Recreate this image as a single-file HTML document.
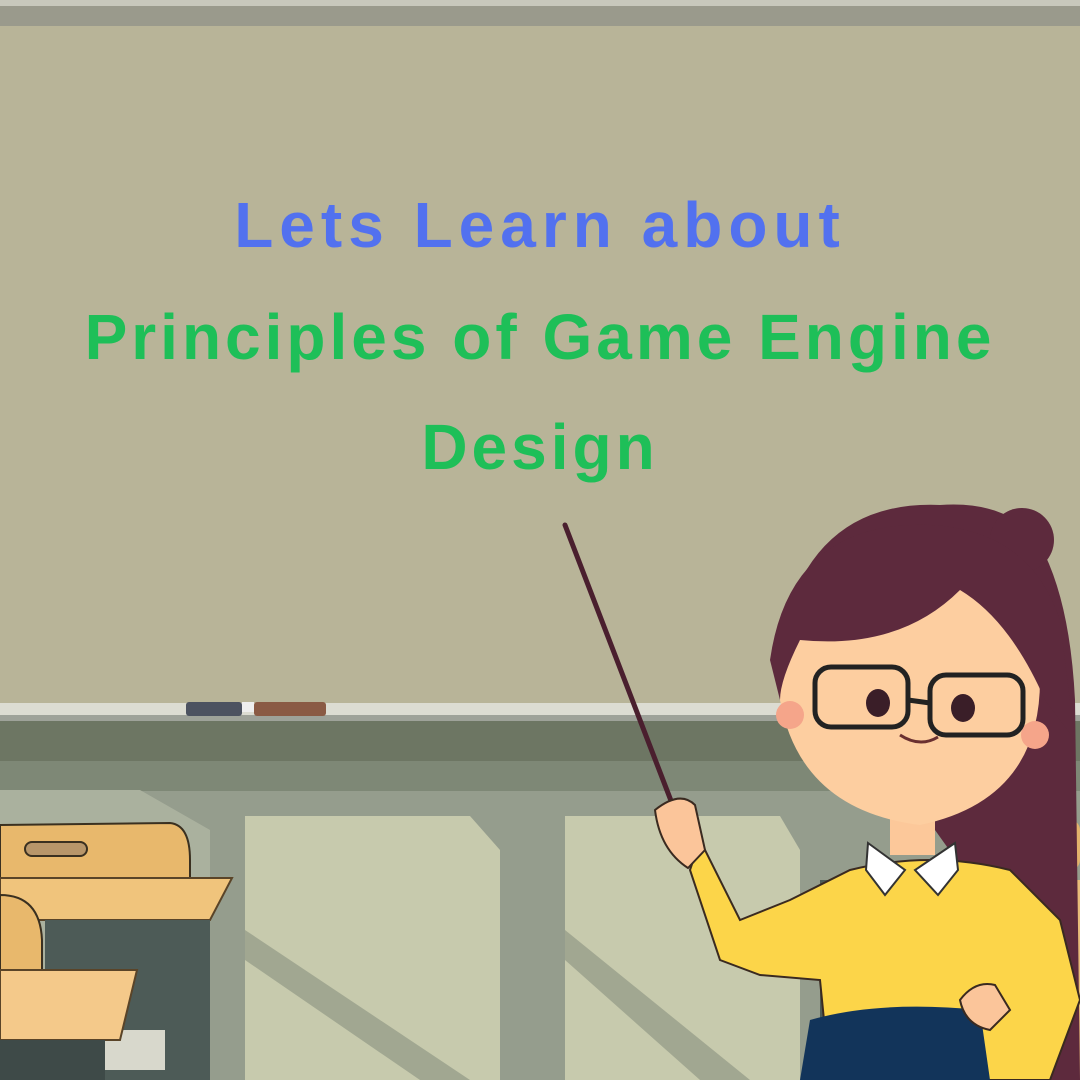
<!DOCTYPE html>
<html><head><meta charset="utf-8"><style>
html,body{margin:0;padding:0;width:1080px;height:1080px;overflow:hidden;background:#b8b498}
svg{position:absolute;left:0;top:0}
.t{position:absolute;left:0;width:1080px;text-align:center;font-family:"Comic Sans MS","Liberation Sans",sans-serif;font-weight:bold;letter-spacing:4px}
</style></head><body>
<svg width="1080" height="1080" viewBox="0 0 1080 1080">
<rect x="0" y="0" width="1080" height="1080" fill="#8d9586"/>
<rect x="0" y="0" width="1080" height="28" fill="#9a9a8c"/>
<rect x="0" y="0" width="1080" height="6" fill="#c8c8bc"/>
<rect x="0" y="26" width="1080" height="678" fill="#b8b498"/>
<rect x="0" y="703" width="1080" height="18" fill="#dcdcd2"/>
<rect x="0" y="715" width="1080" height="6" fill="#9ea299"/>
<rect x="186" y="702" width="56" height="14" rx="3" fill="#4c5260"/>
<rect x="242" y="702" width="12" height="10" fill="#eee"/>
<rect x="254" y="702" width="72" height="14" rx="3" fill="#8a5a44"/>
<rect x="0" y="721" width="1080" height="40" fill="#6d7663"/>
<rect x="0" y="761" width="1080" height="30" fill="#7e8876"/>
<rect x="0" y="791" width="1080" height="289" fill="#959d8d"/>
<polygon points="0,790 140,790 210,830 210,1080 0,1080" fill="#aab19e"/>
<polygon points="245,816 470,816 500,850 500,1080 245,1080" fill="#c7caad"/>
<polygon points="245,930 245,960 420,1080 470,1080" fill="#a1a791"/>
<polygon points="565,816 780,816 800,850 800,1080 565,1080" fill="#c7caad"/>
<polygon points="565,930 565,960 700,1080 750,1080" fill="#a1a791"/>
<path d="M0,825 L170,823 Q190,825 190,860 L190,880 L0,880 Z" fill="#e8b86c" stroke="#3a3020" stroke-width="2"/>
<rect x="25" y="842" width="62" height="14" rx="7" fill="#b8966a" stroke="#3a3020" stroke-width="2"/>
<polygon points="0,878 232,878 210,920 0,920" fill="#f0c47c" stroke="#5a4428" stroke-width="2"/>
<rect x="45" y="920" width="165" height="160" fill="#4d5b57"/>
<rect x="100" y="1030" width="65" height="40" fill="#d8d8cc"/>
<path d="M0,895 Q40,895 42,940 L42,975 L0,975 Z" fill="#e8b86c" stroke="#3a3020" stroke-width="2"/>
<polygon points="0,970 137,970 120,1040 0,1040" fill="#f4c98a" stroke="#5a4428" stroke-width="2"/>
<rect x="0" y="1040" width="105" height="40" fill="#3e4a48"/>
<rect x="1020" y="820" width="60" height="50" rx="10" fill="#e3b36c"/>
<rect x="820" y="880" width="260" height="200" fill="#4d5b57"/>
<rect x="1030" y="880" width="50" height="200" fill="#e9bd7a"/>
<line x1="565" y1="525" x2="703" y2="884" stroke="#4a1f2e" stroke-width="5" stroke-linecap="round"/>
<path d="M785,620 Q820,500 940,505 Q1010,500 1040,545 Q1070,600 1075,700 L1080,1080 L1010,1080 L985,900 Z" fill="#5d2a3d"/>
<circle cx="1022" cy="540" r="32" fill="#5d2a3d"/>
<path d="M850,870 Q930,850 1010,870 L1060,920 L1080,1000 L1050,1080 L830,1080 L820,980 L760,975 L720,960 L690,870 L700,840 L740,920 L790,900 Z" fill="#fcd549" stroke="#3a2a20" stroke-width="2"/>
<path d="M810,1020 Q880,1000 980,1010 L990,1080 L800,1080 Z" fill="#12345a"/>
<polygon points="868,843 905,870 885,895 866,870" fill="#fff" stroke="#333" stroke-width="2"/>
<polygon points="955,843 915,870 938,895 958,870" fill="#fff" stroke="#333" stroke-width="2"/>
<rect x="890" y="810" width="45" height="45" fill="#fcc89a"/>
<path d="M655,810 Q680,790 695,805 L705,850 L688,868 Q660,850 655,810 Z" fill="#fbc59a" stroke="#3a2a20" stroke-width="2"/>
<path d="M960,1000 Q975,980 995,985 L1010,1010 L990,1030 Q965,1025 960,1000Z" fill="#fbc59a" stroke="#3a2a20" stroke-width="2"/>
<path d="M780,650 Q780,580 860,575 L960,575 Q1040,590 1040,680 Q1040,800 920,825 Q800,810 780,700 Z" fill="#fdcea0"/>
<circle cx="790" cy="715" r="14" fill="#f5a58a"/>
<circle cx="1035" cy="735" r="14" fill="#f5a58a"/>
<path d="M770,660 Q790,520 930,525 Q1030,530 1060,620 L1075,740 L1045,700 Q1010,620 960,590 Q900,650 800,640 Q780,680 780,700 Z" fill="#5d2a3d"/>
<rect x="815" y="667" width="93" height="60" rx="16" fill="none" stroke="#222" stroke-width="5"/>
<rect x="930" y="675" width="93" height="60" rx="16" fill="none" stroke="#222" stroke-width="5"/>
<line x1="908" y1="700" x2="930" y2="703" stroke="#222" stroke-width="5"/>
<ellipse cx="878" cy="703" rx="12" ry="14" fill="#3a1e28"/>
<ellipse cx="963" cy="708" rx="12" ry="14" fill="#3a1e28"/>
<path d="M900,735 Q920,748 938,737" fill="none" stroke="#6a3030" stroke-width="3"/>
</svg>
<div class="t" style="top:188px;font-size:64px;color:#5271ef;letter-spacing:6px">Lets Learn about</div>
<div class="t" style="top:300px;font-size:64px;color:#1ebf58">Principles of Game Engine</div>
<div class="t" style="top:410px;font-size:64px;color:#1ebf58">Design</div>
</body></html>
